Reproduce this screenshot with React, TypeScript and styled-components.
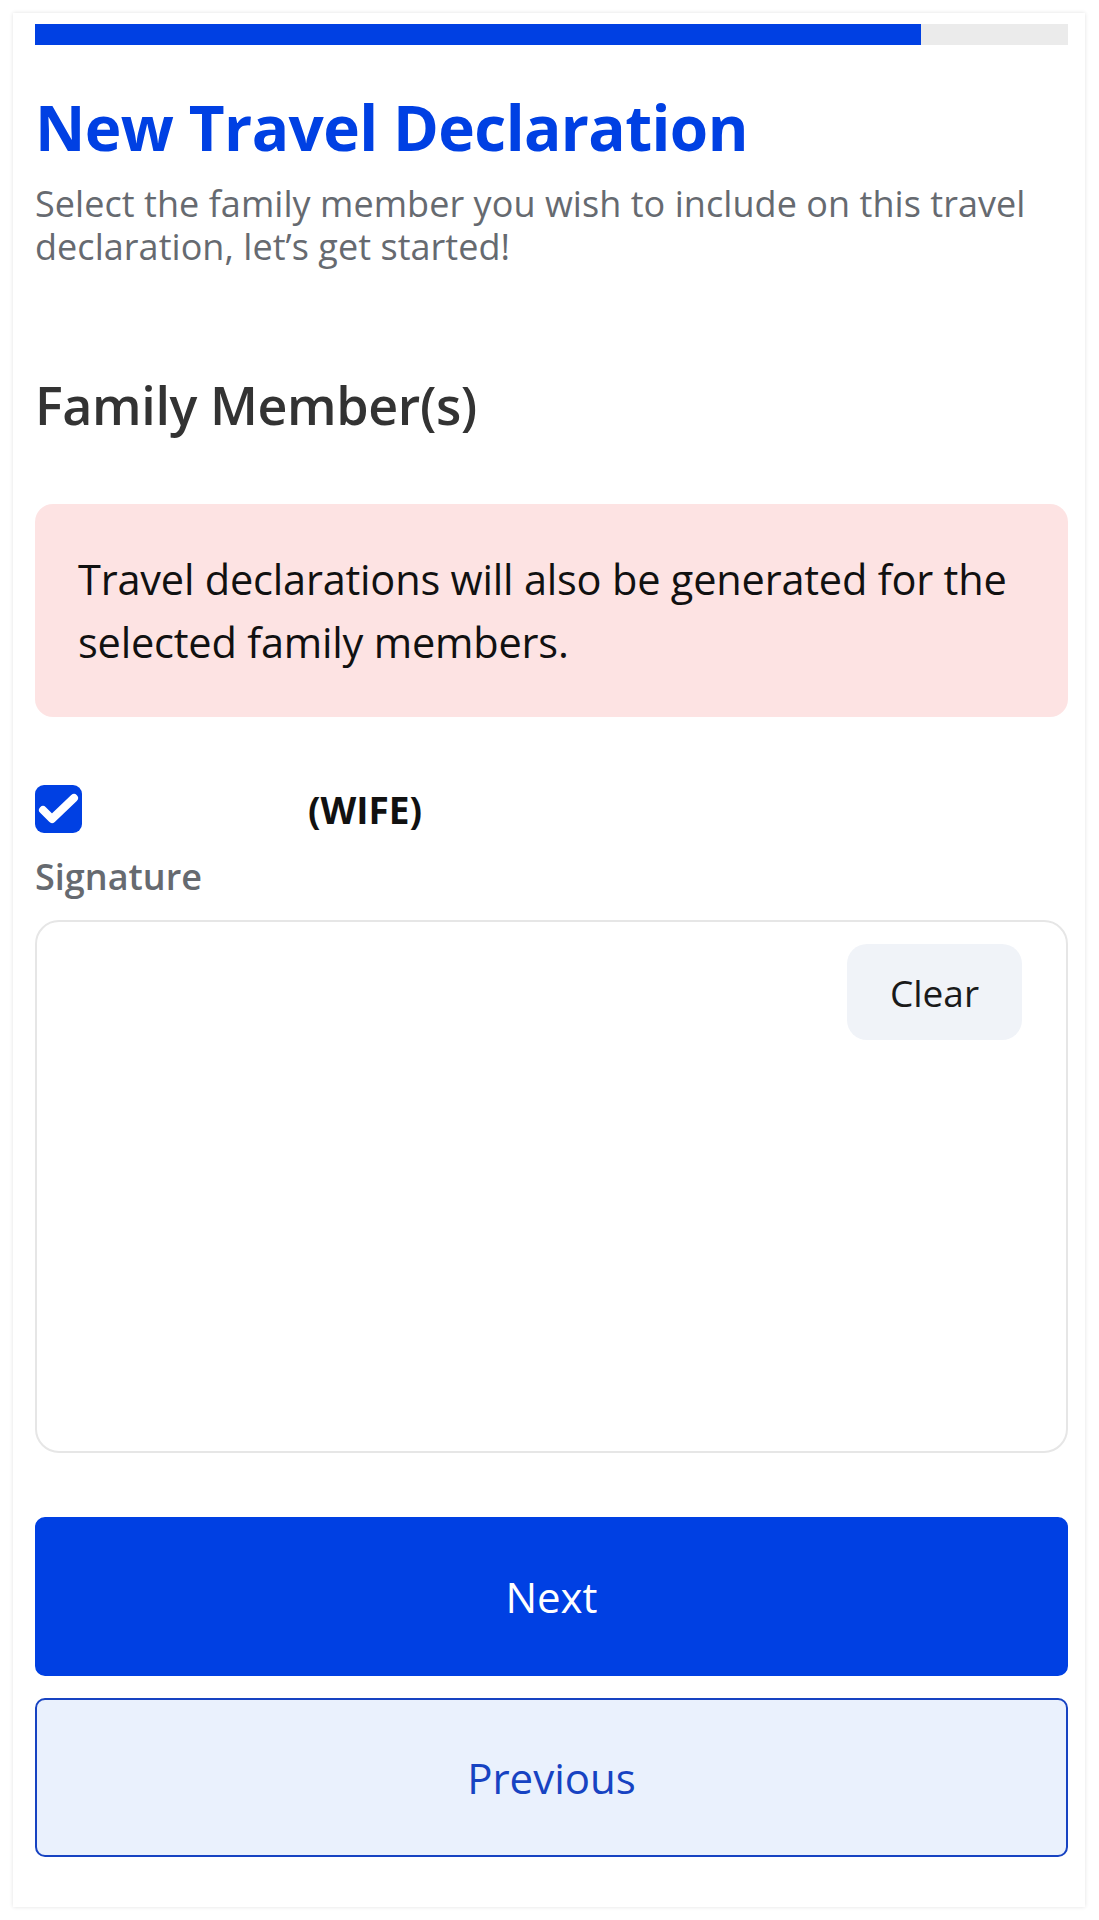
import React from "react";
import styled, { createGlobalStyle } from "styled-components";

const GlobalStyle = createGlobalStyle`
  html, body {
    margin: 0;
    padding: 0;
    background: #ffffff;
  }
  body {
    font-family: "Open Sans", Lato, sans-serif;
  }
  * { box-sizing: border-box; }
`;

const Card = styled.div`
  margin: 13px 14px 13px 13px;
  min-height: 1894px;
  background: #ffffff;
  box-shadow: 0 0 4px rgba(0, 0, 0, 0.12);
  padding: 11px 17px 40px 22px;
  display: flex;
  flex-direction: column;
`;

const ProgressTrack = styled.div`
  height: 21px;
  background: #ebebeb;
  display: flex;
`;

const ProgressFill = styled.div`
  height: 100%;
  background: #0040e3;
`;

const Title = styled.h1`
  margin: 46px 0 0;
  font-size: 62px;
  line-height: 72px;
  font-weight: 700;
  color: #0040e3;
  letter-spacing: -0.6px;
`;

const Subtitle = styled.p`
  margin: 19px 0 0;
  font-size: 36px;
  line-height: 43px;
  color: #666a70;
  font-weight: 400;
  letter-spacing: 0.05px;
`;

const SectionTitle = styled.h2`
  margin: 107px 0 0;
  font-size: 52px;
  line-height: 60px;
  font-weight: 600;
  color: #333333;
  letter-spacing: -0.4px;
`;

const Alert = styled.div`
  margin-top: 69px;
  background: #fde3e3;
  border-radius: 18px;
  padding: 44px 24px 43px 43px;
  font-size: 41.5px;
  line-height: 63px;
  color: #111111;
  letter-spacing: -0.2px;
`;

const MemberRow = styled.label`
  margin-top: 68px;
  display: flex;
  align-items: center;
  height: 48px;
`;

const CheckBox = styled.span`
  width: 47px;
  height: 48px;
  border-radius: 9px;
  background: #0040e3;
  display: flex;
  align-items: center;
  justify-content: center;
  flex-shrink: 0;
`;

const MemberName = styled.span`
  margin-left: 226px;
  font-size: 37px;
  font-weight: 700;
  color: #111111;
`;

const FieldLabel = styled.div`
  margin-top: 22px;
  font-size: 36px;
  line-height: 44px;
  font-weight: 600;
  color: #666a70;
`;

const SignaturePad = styled.div`
  margin-top: 21px;
  height: 533px;
  border: 2px solid #e6e6e6;
  border-radius: 24px;
  display: flex;
  justify-content: flex-end;
  align-items: flex-start;
  padding: 22px 44px 0 0;
`;

const ClearButton = styled.button`
  width: 175px;
  height: 96px;
  border: none;
  border-radius: 20px;
  background: #f0f3f8;
  font-family: inherit;
  font-size: 37px;
  color: #1a1a1a;
`;

const ActionButton = styled.button<{ $variant: "primary" | "secondary" }>`
  width: 100%;
  height: 159px;
  border-radius: 10px;
  font-family: inherit;
  font-size: 42px;
  border: 2px solid ${(p) => (p.$variant === "primary" ? "#0040e3" : "#1743c2")};
  background: ${(p) => (p.$variant === "primary" ? "#0040e3" : "#eaf1fd")};
  color: ${(p) => (p.$variant === "primary" ? "#ffffff" : "#1743c2")};
  margin-top: ${(p) => (p.$variant === "primary" ? "64px" : "22px")};
`;

export default function App() {
  const progress = 85.8;
  return (
    <>
      <GlobalStyle />
      <Card>
        <ProgressTrack>
          <ProgressFill style={{ width: `${progress}%` }} />
        </ProgressTrack>
        <Title>New Travel Declaration</Title>
        <Subtitle>
          Select the family member you wish to include on this travel
          declaration, let’s get started!
        </Subtitle>
        <SectionTitle>Family Member(s)</SectionTitle>
        <Alert>
          Travel declarations will also be generated for the selected family
          members.
        </Alert>
        <MemberRow>
          <CheckBox>
            <svg width="47" height="48" viewBox="0 0 47 48">
              <path
                d="M8 25 L17 34 L39 13"
                fill="none"
                stroke="#ffffff"
                strokeWidth="8"
                strokeLinecap="round"
                strokeLinejoin="round"
              />
            </svg>
          </CheckBox>
          <MemberName>(WIFE)</MemberName>
        </MemberRow>
        <FieldLabel>Signature</FieldLabel>
        <SignaturePad>
          <ClearButton>Clear</ClearButton>
        </SignaturePad>
        <ActionButton $variant="primary">Next</ActionButton>
        <ActionButton $variant="secondary">Previous</ActionButton>
      </Card>
    </>
  );
}
